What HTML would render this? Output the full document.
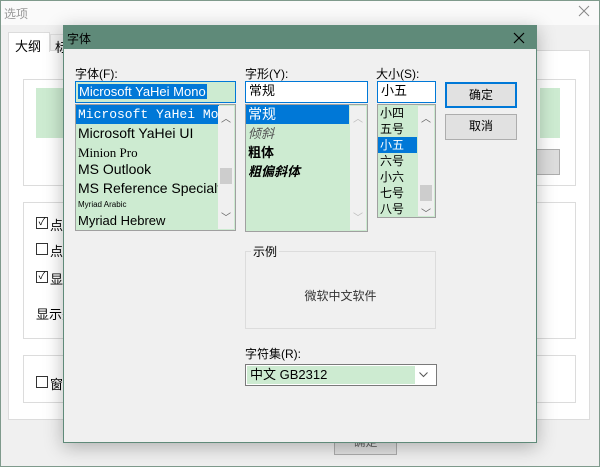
<!DOCTYPE html>
<html><head><meta charset="utf-8"><style>
*{box-sizing:border-box;margin:0;padding:0}
body{width:600px;height:467px;overflow:hidden;background:#f0f0f0;position:relative;font-family:"Liberation Sans","Microsoft YaHei","Noto Sans CJK SC",sans-serif;font-size:12px;color:#000}
.a{position:absolute}
.frame{left:0;top:0;width:600px;height:467px;border:1px solid #7f9a8c}
.cb{width:12px;height:12px;border:1px solid #333;background:#fff;font-size:10px;line-height:10px;text-align:center}
.grp{border:1px solid #dcdcdc}
.list{background:#cdebd1;border:1px solid #a0a0a0;overflow:hidden}
.item{height:19px;line-height:19px;padding-left:2px;white-space:nowrap;font-size:14px}
.sel{background:#0078d7;color:#fff}
.sb{background:#f0f0f0;width:16px;top:1px;bottom:1px;right:1px;color:#606060;font-size:10px;text-align:center}
.btn{background:#e1e1e1;border:1px solid #adadad;text-align:center;line-height:23px;font-size:12px}
.inp{height:22px;line-height:18px;padding:0 3px;font-size:13px}
</style></head><body>
<div class="a" style="left:0;top:0;width:600px;height:25px;background:#fafafa"></div>
<div class="a" style="left:4px;top:5px;color:#999;font-size:12px">选项</div>
<svg class="a" style="left:578px;top:5px" width="12" height="12"><path d="M1 1L11 11M11 1L1 11" stroke="#888" stroke-width="1"/></svg>
<div class="a" style="left:8px;top:50px;width:582px;height:370px;background:#fff;border:1px solid #dcdcdc"></div>
<div class="a" style="left:8px;top:32px;width:42px;height:20px;background:#fff;border:1px solid #dcdcdc;border-bottom:none;padding:3px 6px;font-size:13px">大纲</div>
<div class="a" style="left:50px;top:34px;width:20px;height:17px;background:#f0f0f0;border:1px solid #dcdcdc;padding:2px 4px;font-size:13px">标</div>
<div class="a grp" style="left:23px;top:79px;width:553px;height:107px"></div>
<div class="a" style="left:36px;top:88px;width:30px;height:50px;background:#cdebd1"></div>
<div class="a" style="left:540px;top:88px;width:20px;height:50px;background:#cdebd1"></div>
<div class="a" style="left:530px;top:149px;width:30px;height:26px;background:#ddd;border:1px solid #adadad"></div>
<div class="a grp" style="left:23px;top:202px;width:553px;height:137px"></div>
<div class="a grp" style="left:23px;top:355px;width:553px;height:48px"></div>
<div class="a cb" style="left:36px;top:217px">✓</div><div class="a" style="left:50px;top:215px;font-size:13px">点</div>
<div class="a cb" style="left:36px;top:243px"></div><div class="a" style="left:50px;top:241px;font-size:13px">点</div>
<div class="a cb" style="left:36px;top:271px">✓</div><div class="a" style="left:50px;top:269px;font-size:13px">显</div>
<div class="a" style="left:36px;top:304px;font-size:13px">显示关</div>
<div class="a cb" style="left:36px;top:376px"></div><div class="a" style="left:50px;top:374px;font-size:13px">窗</div>
<div class="a" style="left:334px;top:425px;width:63px;height:30px;background:#e1e1e1;border:1px solid #adadad;text-align:center;padding-top:7px;color:#666">确定</div>
<div class="a frame"></div>

<!-- dialog -->
<div class="a" style="left:63px;top:25px;width:474px;height:418px;background:#f0f0f0;border:1px solid #5f8a79;box-shadow:0 4px 18px rgba(0,0,0,.28)">
 <div style="height:23px;background:#5f8a79;padding:4px 3px;font-size:12px">字体</div>
 <svg class="a" style="right:11px;top:6px" width="12" height="12"><path d="M1 1L11 11M11 1L1 11" stroke="#000" stroke-width="1.2"/></svg>
</div>
<div class="a" style="left:75px;top:65px">字体(F):</div>
<div class="a inp" style="left:75px;top:81px;width:161px;border:1px solid #0078d7;background:#cdebd1;padding:1px 2px"><span style="background:#0078d7;color:#fff;font-size:13px;padding:0 1px">Microsoft YaHei Mono</span></div>
<div class="a list" style="left:75px;top:104px;width:161px;height:127px">
 <div class="item sel" style="font-family:'Liberation Mono',monospace;font-size:13px;width:143px">Microsoft YaHei Mon</div>
 <div class="item">Microsoft YaHei UI</div>
 <div class="item" style="font-family:'Liberation Serif',serif;font-size:13px;height:17px">Minion Pro</div>
 <div class="item">MS Outlook</div>
 <div class="item">MS Reference Specialt</div>
 <div class="item" style="font-size:8px;height:13px;line-height:13px">Myriad Arabic</div>
 <div class="item" style="font-size:13px">Myriad Hebrew</div>
 <div class="a sb" style="top:1px;bottom:1px"><div style="margin-top:4px">︿</div><div style="margin:43px 2px 0;height:16px;background:#cdcdcd"></div><div style="margin-top:25px">﹀</div></div>
</div>
<div class="a" style="left:245px;top:65px">字形(Y):</div>
<div class="a inp" style="left:245px;top:81px;width:123px;border:1px solid #0078d7;background:#fff">常规</div>
<div class="a list" style="left:245px;top:104px;width:123px;height:128px">
 <div class="item sel" style="width:103px">常规</div>
 <div class="item" style="font-style:italic;color:#555;font-size:13px">倾斜</div>
 <div class="item" style="font-weight:bold;font-size:13px">粗体</div>
 <div class="item" style="font-weight:bold;font-style:italic;font-size:13px">粗偏斜体</div>
 <div class="a sb" style="background:#f0f0f0;color:#bbb"><div style="margin-top:4px">︿</div><div style="margin-top:84px">﹀</div></div>
</div>
<div class="a" style="left:376px;top:65px">大小(S):</div>
<div class="a inp" style="left:377px;top:81px;width:59px;border:1px solid #0078d7;background:#fff">小五</div>
<div class="a list" style="left:377px;top:104px;width:59px;height:114px">
 <div class="item" style="height:16px;line-height:16px;font-size:12px">小四</div>
 <div class="item" style="height:16px;line-height:16px;font-size:12px">五号</div>
 <div class="item sel" style="height:16px;line-height:16px;font-size:12px;width:39px">小五</div>
 <div class="item" style="height:16px;line-height:16px;font-size:12px">六号</div>
 <div class="item" style="height:16px;line-height:16px;font-size:12px">小六</div>
 <div class="item" style="height:16px;line-height:16px;font-size:12px">七号</div>
 <div class="item" style="height:16px;line-height:16px;font-size:12px">八号</div>
 <div class="a sb"><div style="margin-top:4px">︿</div><div style="margin:60px 2px 0;height:16px;background:#cdcdcd"></div><div style="margin-top:4px">﹀</div></div>
</div>
<div class="a btn" style="left:445px;top:82px;width:72px;height:26px;border:2px solid #0078d7">确定</div>
<div class="a btn" style="left:445px;top:114px;width:72px;height:26px">取消</div>
<div class="a" style="left:245px;top:251px;width:191px;height:78px;border:1px solid #dcdcdc"></div>
<div class="a" style="left:251px;top:243px;background:#f0f0f0;padding:0 2px">示例</div>
<div class="a" style="left:245px;top:287px;width:191px;text-align:center;font-size:12px;color:#333">微软中文软件</div>
<div class="a" style="left:245px;top:345px">字符集(R):</div>
<div class="a" style="left:245px;top:364px;width:192px;height:22px;border:1px solid #7a7a7a;background:#fff">
 <div style="position:absolute;left:1px;top:1px;width:168px;height:18px;background:#cdebd1;padding:0 3px;line-height:18px;font-size:13px">中文 GB2312</div>
 <svg style="position:absolute;right:8px;top:7px" width="9" height="6"><path d="M0.5 0.5L4.5 4.5L8.5 0.5" stroke="#555" fill="none"/></svg>
</div>
</body></html>
